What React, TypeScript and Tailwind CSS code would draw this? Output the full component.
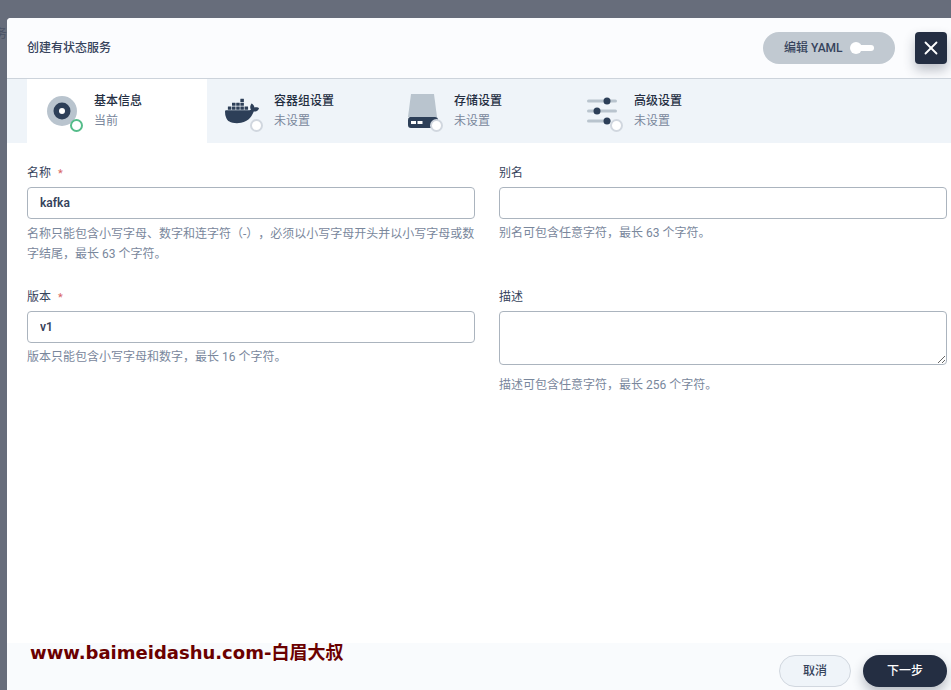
import React from 'react';
import { SiDocker } from 'react-icons/si';
import { X } from 'lucide-react';

const FONT = 'font-["Roboto","Noto_Sans_CJK_SC",sans-serif]';

const DiscIcon = () => (
  <svg width="38" height="32" viewBox="0 0 38 32">
    <circle cx="17" cy="16" r="15" fill="#b9c4ce" />
    <circle cx="17" cy="16" r="8.5" fill="#2d3f58" />
    <circle cx="17" cy="16" r="3" fill="#ffffff" />
  </svg>
);

const DockerIcon = () => (
  <div className="flex h-[32px] w-[38px] items-center">
    <SiDocker className="h-[34px] w-[34px] text-[#2d3f58]" />
  </div>
);

const DriveIcon = () => (
  <svg width="38" height="34" viewBox="0 0 38 34" className="-mt-[1px]">
    <path d="M6 0h23l3 23H3z" fill="#b9c4ce" />
    <path d="M5 23h25a3 3 0 0 1 3 3v5a3 3 0 0 1-3 3H6a3 3 0 0 1-3-3v-5a3 3 0 0 1 2-3z" fill="#2d3f58" />
    <rect x="6" y="27" width="5" height="3" fill="#ffffff" />
    <rect x="12.500" y="27" width="5" height="3" fill="#ffffff" />
  </svg>
);

const SlidersIcon = () => (
  <svg width="38" height="32" viewBox="0 0 38 32">
    <rect x="2" y="4.500" width="30" height="3" rx="1.500" fill="#b9c4ce" />
    <rect x="2" y="14.500" width="30" height="3" rx="1.500" fill="#b9c4ce" />
    <rect x="2" y="24.500" width="24" height="3" rx="1.500" fill="#b9c4ce" />
    <circle cx="22" cy="6" r="3.500" fill="#2d3f58" />
    <circle cx="12" cy="16" r="3.500" fill="#2d3f58" />
    <circle cx="22" cy="26" r="3.500" fill="#2d3f58" />
  </svg>
);

const tabs = [
  { title: '基本信息', sub: '当前', icon: <DiscIcon />, active: true },
  { title: '容器组设置', sub: '未设置', icon: <DockerIcon />, active: false },
  { title: '存储设置', sub: '未设置', icon: <DriveIcon />, active: false },
  { title: '高级设置', sub: '未设置', icon: <SlidersIcon />, active: false },
];

const Label: React.FC<{ text: string; required?: boolean }> = ({ text, required }) => (
  <div className="h-[20px] text-xs leading-[22px] text-[#36435c]">
    {text}
    {required && <span className="ml-[7px] text-[11px] text-[#d8645f]">*</span>}
  </div>
);

const Hint: React.FC<{ children: React.ReactNode; className?: string }> = ({ children, className }) => (
  <p className={`text-xs leading-[20px] text-[#79879c] [text-spacing-trim:space-all] ${className ?? ''}`}>{children}</p>
);

const inputClass =
  'block h-[32px] w-full rounded-[4px] border border-[#abb4be] bg-white px-[12px] text-xs font-semibold text-[#36435c] outline-none';

export default function App() {
  return (
    <div className={`relative flex h-[690px] w-[951px] overflow-hidden bg-[#676d7b] pl-[7px] pt-[18px] ${FONT}`}>
      {/* bit of the page behind the modal that peeks out on the left */}
      <span className="absolute left-0 top-[26px] w-[7px] overflow-hidden whitespace-nowrap text-xs leading-[16px] text-[#4a5265]">
        <span className="-ml-[5px] inline-block">务</span>
      </span>

      <div className="flex min-w-0 flex-1 flex-col overflow-hidden rounded-tl-[4px] bg-white">
        <header className="flex h-[60px] items-center justify-between bg-[#fbfcfe] pl-[20px] pr-[4px]">
          <h1 className="text-xs font-medium text-[#36435c]">创建有状态服务</h1>
          <div className="flex items-center gap-[20px]">
            <div className="flex h-[32px] w-[132px] items-center rounded-full bg-[#c1c9d1] pl-[21px]">
              <span className="text-xs font-medium text-[#36435c]">编辑 YAML</span>
              <span className="relative ml-[7px] h-[12px] w-[24px]">
                <span className="absolute left-0 top-0 h-[12px] w-[12px] rounded-full bg-white" />
                <span className="absolute left-[6px] top-[3px] h-[6px] w-[18px] rounded-full bg-white" />
              </span>
            </div>
            <button className="flex h-[32px] w-[32px] items-center justify-center rounded-[4px] bg-[#242e42] text-white shadow-[0_6px_12px_rgba(36,46,66,0.3)]">
              <X size={22} strokeWidth={2} />
            </button>
          </div>
        </header>

        <nav className="flex h-[65px] border-t border-[#ccd3db] bg-[#eff4f9] pl-[20px]">
          {tabs.map((tab) => (
            <div
              key={tab.title}
              className={`flex h-[64px] w-[180px] items-center pl-[18px] ${tab.active ? 'bg-white' : ''}`}
            >
              <div className="relative h-[32px] w-[49px]">
                {tab.icon}
                <span
                  className={`absolute left-[25px] top-[24px] h-[13px] w-[13px] rounded-full border-2 bg-white ${
                    tab.active ? 'border-[#55bc8a]' : 'border-[#d1d7df]'
                  }`}
                />
              </div>
              <div>
                <div className="text-xs font-medium leading-[20px] text-[#242e42]">{tab.title}</div>
                <div className="text-xs leading-[20px] text-[#79879c]">{tab.sub}</div>
              </div>
            </div>
          ))}
        </nav>

        <main className="grid flex-1 grid-cols-2 content-start gap-x-[24px] gap-y-[22px] bg-white pl-[20px] pr-[4px] pt-[19px]">
          <div>
            <Label text="名称" required />
            <input className={`${inputClass} mt-[5px]`} defaultValue="kafka" />
            <Hint className="mt-[5px]">
              名称只能包含小写字母、数字和连字符（-），必须以小写字母开头并以小写字母或数字结尾，最长 63 个字符。
            </Hint>
          </div>
          <div>
            <Label text="别名" />
            <input className={`${inputClass} mt-[5px]`} />
            <Hint className="mt-[4px]">别名可包含任意字符，最长 63 个字符。</Hint>
          </div>
          <div>
            <Label text="版本" required />
            <input className={`${inputClass} mt-[5px]`} defaultValue="v1" />
            <Hint className="mt-[4px]">版本只能包含小写字母和数字，最长 16 个字符。</Hint>
          </div>
          <div>
            <Label text="描述" />
            <textarea className={`${inputClass} mt-[5px] !h-[54px]`} />
            <Hint className="mt-[10px]">描述可包含任意字符，最长 256 个字符。</Hint>
          </div>
        </main>

        <footer className="flex h-[47px] items-start justify-end gap-[12px] bg-[#f9fbfd] pr-[4px] pt-[12px]">
          <button className="h-[32px] w-[72px] rounded-full border border-[#d1d7df] bg-[#eff4f9] text-xs font-medium text-[#36435c]">
            取消
          </button>
          <button className="h-[32px] w-[84px] rounded-full bg-[#242e42] text-xs font-medium text-white shadow-[0_6px_12px_rgba(36,46,66,0.3)]">
            下一步
          </button>
        </footer>
      </div>

      <div className='absolute left-[30px] top-[642px] whitespace-nowrap font-["DejaVu_Sans","Noto_Sans_CJK_SC",sans-serif] text-[18px] font-bold leading-[22px] text-[#6b0000]'>
        www.baimeidashu.com-白眉大叔
      </div>
    </div>
  );
}
